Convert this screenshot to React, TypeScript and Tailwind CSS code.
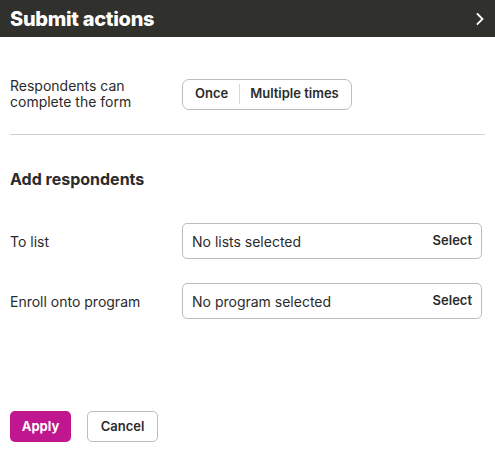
import React from "react";

function SelectField({ placeholder }: { placeholder: string }) {
  return (
    <div className="flex h-[36px] w-[300px] items-center justify-between rounded-[5px] border border-[#bdbdbd] bg-white pl-[9px] pr-[9px]">
      <span className="text-[14px] text-[#2b2b2b]">{placeholder}</span>
      <span className="text-[13px] font-semibold text-[#2b2b2b]">Select</span>
    </div>
  );
}

export default function App() {
  return (
    <div
      className="flex h-[453px] w-[495px] flex-col bg-white text-[#2b2b2b]"
      style={{ fontFamily: "Inter, 'Noto Sans', sans-serif" }}
    >
      <header className="flex h-[37px] items-center justify-between bg-[#30302c] pl-[10px] pr-[10px]">
        <h1 className="text-[20px] font-extrabold tracking-[-0.3px] text-white">Submit actions</h1>
        <svg width="10" height="14" viewBox="0 0 10 14" fill="none">
          <path d="M2.5 2 L7.5 7 L2.5 12" stroke="white" strokeWidth="1.8" strokeLinecap="square" />
        </svg>
      </header>

      <div className="flex flex-col px-[10px]">
        <div className="mt-[41px] flex items-center">
          <div className="w-[172px] text-[14px] leading-[16px] text-[#2b2b2b]">
            Respondents can
            <br />
            complete the form
          </div>
          <div className="flex h-[31px] items-center rounded-[7px] border border-[#bdbdbd] px-[1px]">
            <button className="h-full pl-[11px] pr-[11px] text-[13px] font-semibold text-[#2b2b2b]">Once</button>
            <span className="h-[20px] w-px bg-[#d6d6d6]" />
            <button className="h-full pl-[10px] pr-[11px] text-[13px] font-semibold text-[#2b2b2b]">Multiple times</button>
          </div>
        </div>

        <div className="mt-[24px] h-px bg-[#d0d0d0]" />

        <h2 className="mt-[32px] text-[16px] font-bold text-[#2b2b2b]">Add respondents</h2>

        <div className="mt-[32px] flex items-center">
          <span className="w-[172px] text-[14px]">To list</span>
          <SelectField placeholder="No lists selected" />
        </div>
        <div className="mt-[24px] flex items-center">
          <span className="w-[172px] text-[14px]">Enroll onto program</span>
          <SelectField placeholder="No program selected" />
        </div>
      </div>

      <div className="mt-auto mb-[11px] flex gap-[16px] px-[10px]">
        <button className="h-[31px] w-[61px] rounded-[5px] bg-[#c0168f] text-[13px] font-bold text-white">Apply</button>
        <button className="h-[31px] w-[71px] rounded-[5px] border border-[#bdbdbd] bg-white text-[13px] font-semibold text-[#2b2b2b]">
          Cancel
        </button>
      </div>
    </div>
  );
}
